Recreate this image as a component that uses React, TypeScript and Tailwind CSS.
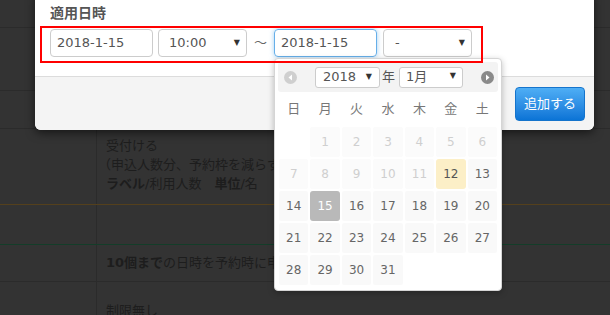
// Modal "適用日時" with an open datepicker, over a dimmed settings table

const FONT = "font-['DejaVu_Sans','Noto_Sans_CJK_JP',sans-serif]";

type Day = { n: number | null; state?: "off" | "today" | "sel" };

const WEEK = ["日", "月", "火", "水", "木", "金", "土"];

function buildDays(): Day[] {
    const days: Day[] = [{ n: null }];
    for (let i = 1; i <= 31; i++) {
        let state: Day["state"];
        if (i < 12) state = "off";
        if (i === 12) state = "today";
        if (i === 15) state = "sel";
        days.push({ n: i, state });
    }
    while (days.length < 35) days.push({ n: null });
    return days;
}

function Arrow() {
    return <span className="text-[8px] leading-none text-[#333]">▼</span>;
}

function NavCircle({ dir, tone }: { dir: "prev" | "next"; tone: string }) {
    return (
        <svg width="13" height="13" viewBox="0 0 13 13" className="shrink-0">
            <circle cx="6.5" cy="6.5" r="6.5" fill={tone} />
            {dir === "prev" ? (
                <path d="M8 3.5 L4.5 6.5 L8 9.5 Z" fill="#fff" />
            ) : (
                <path d="M5 3.5 L8.5 6.5 L5 9.5 Z" fill="#fff" />
            )}
        </svg>
    );
}

function DatePicker() {
    const days = buildDays();
    return (
        <div className="absolute left-[239px] top-[68px] z-10 w-[228px] h-[233px] bg-white border border-[#d5d5d5] rounded-[4px] p-[3px] shadow-[0_2px_6px_rgba(0,0,0,0.25)]">
            {/* header: prev / year / month / next */}
            <div className="flex items-center h-[30px] bg-[#f3f3f3] rounded-[3px]">
                <div className="ml-[6px]">
                    <NavCircle dir="prev" tone="#cfcfcf" />
                </div>
                <div className="ml-[18px] flex items-center justify-between w-[65px] h-[21px] border border-[#ccc] rounded-[3px] bg-white pl-[7px] pr-[7px] text-[13px] text-[#555]">
                    <span>2018</span>
                    <Arrow />
                </div>
                <span className="ml-[2px] text-[13px] text-[#555]">年</span>
                <div className="ml-[4px] flex items-center justify-between w-[64px] h-[21px] border border-[#ccc] rounded-[3px] bg-white pl-[6px] pr-[6px] text-[13px] text-[#555]">
                    <span>1月</span>
                    <span className="-mt-[6px]"><Arrow /></span>
                </div>
                <div className="ml-[18px]">
                    <NavCircle dir="next" tone="#8a8a8a" />
                </div>
            </div>

            {/* weekday names */}
            <div className="grid grid-cols-7 h-[34px] items-center text-center text-[13px] text-[#777]">
                {WEEK.map((w) => (
                    <span key={w}>{w}</span>
                ))}
            </div>

            {/* dates */}
            <div className="grid grid-cols-7">
                {days.map((d, i) => (
                    <div key={i} className="h-[32px] p-px">
                        {d.n !== null && (
                            <div
                                className={
                                    d.state === "sel"
                                        ? "h-full flex items-center justify-center rounded-[3px] bg-[#b9b9b9] text-white text-[12px]"
                                        : d.state === "today"
                                        ? "h-full flex items-center justify-center rounded-[3px] bg-[#fcefc7] text-[#555] text-[12px]"
                                        : d.state === "off"
                                        ? "h-full flex items-center justify-center rounded-[2px] bg-[#fbfbfb] text-[#cfcfcf] text-[12px]"
                                        : "h-full flex items-center justify-center rounded-[2px] bg-[#f9f9f9] text-[#666] text-[12px]"
                                }
                            >
                                {d.n}
                            </div>
                        )}
                    </div>
                ))}
            </div>
        </div>
    );
}

function Modal() {
    return (
        <div className="absolute left-[35px] top-[-10px] w-[559px] rounded-md bg-white shadow-[0_3px_10px_rgba(0,0,0,0.55)]">
            <div className="pt-[13px] pb-[13px] border-b border-[#dcdcdc]">
                <div className="pl-[15px] h-[20px] leading-[20px] text-[14px] font-bold text-[#555]">適用日時</div>

                {/* the row of inputs, with its red outline */}
                <div className="relative mt-[3px] ml-[5px] w-[443px] h-[37px] pt-[3px] pl-[10px] flex items-start">
                    <div className="w-[103px] h-[28px] border border-[#ccc] rounded-[4px] pl-[6px] flex items-center text-[13px] text-[#555]">
                        2018-1-15
                    </div>
                    <div className="ml-[5px] w-[89px] h-[28px] border border-[#ccc] rounded-[4px] pl-[10px] pr-[6px] flex items-center justify-between text-[13px] text-[#555]">
                        <span>10:00</span>
                        <Arrow />
                    </div>
                    <span className="w-[27px] h-[28px] flex items-center justify-center text-[13px] text-[#666]">〜</span>
                    <div className="w-[103px] h-[28px] border border-[#66afe9] rounded-[4px] pl-[6px] flex items-center text-[13px] text-[#555] shadow-[0_0_5px_rgba(102,175,233,0.6)]">
                        2018-1-15
                    </div>
                    <div className="ml-[6px] w-[89px] h-[28px] border border-[#ccc] rounded-[4px] pl-[11px] pr-[6px] flex items-center justify-between text-[13px] text-[#555]">
                        <span>-</span>
                        <Arrow />
                    </div>
                    <div className="absolute inset-0 z-20 border-2 border-[#f00] pointer-events-none" />
                </div>
            </div>

            <div className="h-[53px] bg-[#f4f4f4] rounded-b-md pt-[10px] pr-[9px] flex justify-end items-start">
                <button className="w-[70px] h-[34px] rounded-[4px] border border-[#1574cc] bg-gradient-to-b from-[#4eaef5] to-[#0a74d6] text-white text-[13px]">
                    追加する
                </button>
            </div>

            <DatePicker />
        </div>
    );
}

export default function App() {
    const cell = "w-[97px] shrink-0 border-r border-[#2b2b2b]";
    return (
        <div className={`relative w-[610px] h-[315px] overflow-hidden bg-[#333] ${FONT}`}>
            {/* table behind the overlay */}
            <div className="flex h-[28px] border-b border-[#2b2b2b]">
                <div className={cell} />
            </div>
            <div className="flex h-[63px] border-b border-[#2b2b2b]">
                <div className={cell} />
            </div>
            <div className="flex h-[38px] border-b border-[#2b2b2b]">
                <div className={cell} />
            </div>
            <div className="flex h-[76px] border-b border-[#54401c]">
                <div className={cell} />
                <div className="pt-[7px] pl-[9px] text-[13px] leading-[19px] text-[#1d1d1d]">
                    <div>受付ける</div>
                    <div className="-ml-[8px]">（申込人数分、予約枠を減らす）</div>
                    <div>
                        <b>ラベル</b>/利用人数　<b>単位</b>/名
                    </div>
                </div>
            </div>
            <div className="flex h-[40px] border-b border-[#143d29]">
                <div className={cell} />
            </div>
            <div className="flex h-[37px] border-b border-[#2b2b2b]">
                <div className={cell} />
                <div className="pl-[9px] flex items-center text-[13px] text-[#1d1d1d]">
                    <b>10個まで</b>の日時を予約時に申込可能
                </div>
            </div>
            <div className="flex h-[40px]">
                <div className={cell} />
                <div className="pl-[9px] pt-[19px] text-[13px] leading-[19px] text-[#1d1d1d]">制限無し</div>
            </div>

            <Modal />
        </div>
    );
}
